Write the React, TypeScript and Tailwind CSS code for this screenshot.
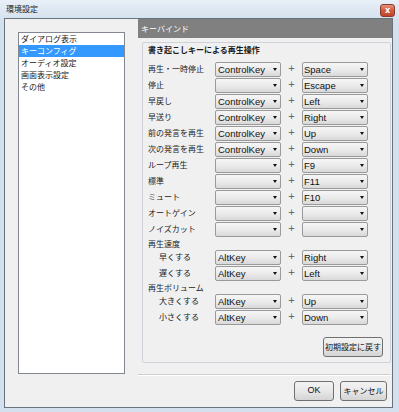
import React from 'react';

type Row =
  | { kind: 'key'; label: string; mod: string; key: string; indent?: boolean }
  | { kind: 'head'; label: string };

const ROWS: Row[] = [
  { kind: 'key', label: '再生・一時停止', mod: 'ControlKey', key: 'Space' },
  { kind: 'key', label: '停止', mod: '', key: 'Escape' },
  { kind: 'key', label: '早戻し', mod: 'ControlKey', key: 'Left' },
  { kind: 'key', label: '早送り', mod: 'ControlKey', key: 'Right' },
  { kind: 'key', label: '前の発言を再生', mod: 'ControlKey', key: 'Up' },
  { kind: 'key', label: '次の発言を再生', mod: 'ControlKey', key: 'Down' },
  { kind: 'key', label: 'ループ再生', mod: '', key: 'F9' },
  { kind: 'key', label: '標準', mod: '', key: 'F11' },
  { kind: 'key', label: 'ミュート', mod: '', key: 'F10' },
  { kind: 'key', label: 'オートゲイン', mod: '', key: '' },
  { kind: 'key', label: 'ノイズカット', mod: '', key: '' },
  { kind: 'head', label: '再生速度' },
  { kind: 'key', label: '早くする', mod: 'AltKey', key: 'Right', indent: true },
  { kind: 'key', label: '遅くする', mod: 'AltKey', key: 'Left', indent: true },
  { kind: 'head', label: '再生ボリューム' },
  { kind: 'key', label: '大きくする', mod: 'AltKey', key: 'Up', indent: true },
  { kind: 'key', label: '小さくする', mod: 'AltKey', key: 'Down', indent: true },
];

const PAGES = ['ダイアログ表示', 'キーコンフィグ', 'オーディオ設定', '画面表示設定', 'その他'];

const Combo = ({ value, tight }: { value: string; tight?: boolean }) => (
  <div
    className={`w-[66px] h-[15px] flex items-center justify-between border border-[#9a9a9a] rounded-[2px] bg-linear-to-b from-[#f6f6f6] via-[#ebebeb] to-[#d9d9d9] pr-[3px] ${
      tight ? 'pl-[1px]' : 'pl-[2px]'
    }`}
  >
    <span className="font-['Liberation_Sans',sans-serif] text-[9.5px] leading-none text-[#111]">{value}</span>
    <span className="w-0 h-0 border-l-[2px] border-r-[2px] border-t-[3px] border-l-transparent border-r-transparent border-t-[#111]" />
  </div>
);

const WinButton = ({ children, className }: { children: React.ReactNode; className?: string }) => (
  <button
    className={`h-[20px] flex items-center justify-center border border-[#707070] rounded-[3px] bg-linear-to-b from-[#f3f3f3] via-[#e8e8e8] to-[#d4d4d4] text-[8px] text-[#111] ${className ?? ''}`}
  >
    {children}
  </button>
);

export default function App() {
  return (
    <div className="w-[399px] h-[412px] flex flex-col bg-[#d4e0ed] overflow-hidden font-['Noto_Sans_CJK_JP',sans-serif] text-[8px] text-[#1a1a1a]">
      {/* タイトルバー */}
      <div className="h-[18px] flex items-start justify-between pl-[6px] pr-[4px] bg-linear-to-b from-[#e8eff7] to-[#d6e2ef]">
        <span className="mt-[5px] leading-none text-[8px] text-[#222]">環境設定</span>
        <div className="mt-[4px] w-[15px] h-[13px] flex items-center justify-center rounded-[3px] border border-[#8a3a2a] bg-linear-to-b from-[#e7937c] via-[#d15a3d] to-[#c2442a]">
          <span className="font-['DejaVu_Sans',sans-serif] text-[8px] font-bold leading-none text-white">x</span>
        </div>
      </div>

      {/* クライアント領域 */}
      <div className="ml-[4px] mr-[6px] h-[390px] flex border border-[#69737e] bg-[#f0f0f0]">
        {/* 左: ページ一覧 */}
        <div className="ml-[13px] mt-[13px] w-[107px] h-[342px] border border-[#828790] bg-white">
          {PAGES.map((p, i) => (
            <div
              key={p}
              className={`h-[12px] pl-[2px] leading-[12px] ${i === 1 ? 'bg-[#3399ff] text-white' : ''}`}
            >
              {p}
            </div>
          ))}
        </div>

        {/* 右: キーバインド */}
        <div className="ml-[13px] flex-1 flex flex-col">
          <div className="h-[19px] flex items-center pl-[3px] bg-[#808080] text-white">キーバインド</div>

          <div className="mt-[4px] ml-[4px] mr-[1px] h-[321px] flex flex-col border border-[#cdd3d8] rounded-[2px] pl-[5px] pt-[1px]">
            <div className="h-[12px] leading-[12px] font-bold">書き起こしキーによる再生操作</div>
            <div className="mt-[6px] flex flex-col">
              {ROWS.map((r, i) =>
                r.kind === 'head' ? (
                  <div key={i} className="h-[12px] leading-[12px]">
                    {r.label}
                  </div>
                ) : (
                  <div key={i} className="h-[16px] flex items-start">
                    <div className={`w-[67px] leading-[14px] ${r.indent ? 'pl-[11px]' : ''}`}>{r.label}</div>
                    <Combo value={r.mod} />
                    <div className="w-[21px] text-center leading-[13px] text-[#555] font-['DejaVu_Sans',sans-serif] text-[9px]">+</div>
                    <Combo value={r.key} tight />
                  </div>
                )
              )}
            </div>
            <WinButton className="mt-[11px] self-end mr-[7px] w-[60px]">初期設定に戻す</WinButton>
          </div>

          <div className="mt-[11px] mr-[1px] border-t border-[#cfcfcf] border-b border-b-white" />

          <div className="mt-[5px] flex justify-end gap-[6px] pr-[5px]">
            <WinButton className="w-[40px] font-['Liberation_Sans',sans-serif] text-[9px]">OK</WinButton>
            <WinButton className="w-[47px]">キャンセル</WinButton>
          </div>
        </div>
      </div>
    </div>
  );
}
